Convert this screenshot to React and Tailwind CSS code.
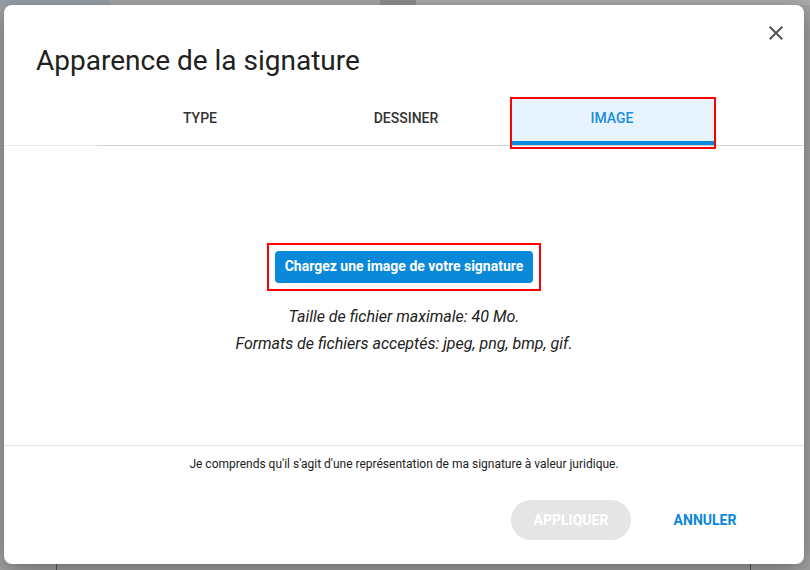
import React, { useState } from "react";

const tabs = ["TYPE", "DESSINER", "IMAGE"];

export default function App() {
  const [activeTab, setActiveTab] = useState("IMAGE");

  return (
    <div
      className="w-[810px] h-[570px] bg-[#a2a2a2] relative overflow-hidden"
      style={{ fontFamily: "Roboto, 'Noto Sans', sans-serif" }}
    >
      {/* page behind the backdrop */}
      <div className="absolute inset-x-0 top-0 h-[5px] flex">
        <div className="w-[110px] bg-[#97a0a8]" />
        <div className="w-[270px] bg-[#a7a7a7]" />
        <div className="w-[36px] bg-[#8f8f8f]" />
        <div className="flex-1 bg-[#acacac]" />
      </div>
      <div className="absolute left-[56px] bottom-0 w-px h-[6px] bg-[#555]" />
      <div className="absolute left-[750px] bottom-0 w-px h-[6px] bg-[#555]" />

      <div className="absolute left-[4px] top-[5px] w-[800px] h-[559px] bg-white rounded-[8px] shadow-[0_6px_24px_rgba(0,0,0,0.35)] flex flex-col">
        {/* header */}
        <div className="relative pt-[40px] pl-[32px]">
          <h2 className="text-[28px] leading-[32px] text-[#212121] font-normal">
            Apparence de la signature
          </h2>
          <button className="absolute top-[20px] right-[20px] w-[16px] h-[16px] text-[#555] cursor-pointer">
            <svg viewBox="0 0 14 14" className="w-[16px] h-[16px]" fill="none" stroke="currentColor" strokeWidth="1.8">
              <path d="M1.5 1.5 L12.5 12.5 M12.5 1.5 L1.5 12.5" />
            </svg>
          </button>
        </div>

        {/* tabs */}
        <div className="mt-[20px] relative h-[52px]">
          <div className="absolute inset-x-0 top-[48px] h-px flex">
            <div className="w-[93px] bg-[#ececec]" />
            <div className="flex-1 bg-[#d2d2d2]" />
          </div>
          <div className="flex pl-[93px]">
            {tabs.map((tab) => {
              const active = tab === activeTab;
              return (
                <button
                  key={tab}
                  onClick={() => setActiveTab(tab)}
                  className={`relative w-[206px] h-[52px] text-[14px] font-medium cursor-pointer ${
                    active ? "text-[#1b8de0]" : "text-[#333]"
                  }`}
                >
                  {active && (
                    <div className="absolute left-[1px] right-[-1px] inset-y-0 border-2 border-[#ff0000] p-0">
                      <div className="h-[42px] bg-[#e8f4fd]" />
                      <div className="h-[4px] bg-[#0b87db]" />
                    </div>
                  )}
                  <span className="relative -top-[5px]">{tab}</span>
                </button>
              );
            })}
          </div>
        </div>

        {/* body */}
        <div className="h-[297px] flex flex-col items-center justify-center border-b border-[#e4e4e4] pt-[5px]">
          <div className="border-2 border-[#ff0000] p-[6px]">
            <button className="block w-[258px] h-[32px] bg-[#0a89db] text-white text-[14px] font-bold rounded-[4px] cursor-pointer">
              Chargez une image de votre signature
            </button>
          </div>
          <p className="mt-[12px] text-[16px] leading-[27px] italic text-[#212121]">
            Taille de fichier maximale: 40 Mo.
          </p>
          <p className="text-[16px] leading-[27px] italic text-[#212121]">
            Formats de fichiers acceptés: jpeg, png, bmp, gif.
          </p>
        </div>

        {/* footer */}
        <p className="mt-[10px] text-center text-[12px] leading-[16px] text-[#212121]">
          Je comprends qu'il s'agit d'une représentation de ma signature à valeur juridique.
        </p>
        <div className="mt-[28px] flex justify-end pr-[39px] gap-[14px]">
          <button
            disabled
            className="w-[120px] h-[40px] rounded-full bg-[#e5e5e5] text-white text-[14px] font-bold"
          >
            APPLIQUER
          </button>
          <button className="w-[120px] h-[40px] text-[#0b87db] text-[14px] font-bold cursor-pointer">
            ANNULER
          </button>
        </div>
      </div>
    </div>
  );
}
